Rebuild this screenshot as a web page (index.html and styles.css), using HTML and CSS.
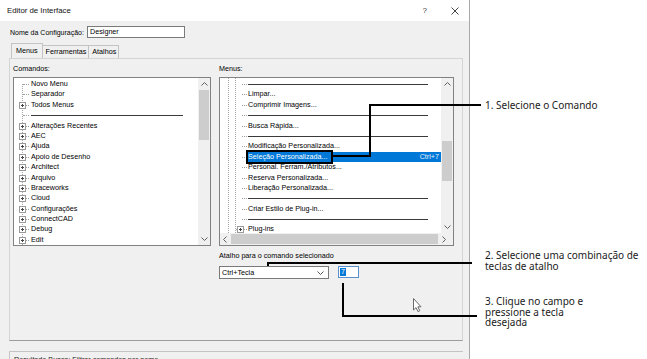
FILE: index.html
```html
<!DOCTYPE html>
<html lang="pt">
<head>
<meta charset="utf-8">
<title>Editor de Interface</title>
<link rel="stylesheet" href="styles.css">
</head>
<body>
<div class="screen">
  <div class="dialog">
    <div class="titlebar">
      <span class="title">Editor de Interface</span>
      <span class="tb-help">?</span>
      <svg class="tb-close" width="8" height="8" viewBox="0 0 8 8"><path d="M0.5 0.5L7.5 7.5M7.5 0.5L0.5 7.5" stroke="#444" stroke-width="1" fill="none"/></svg>
    </div>
    <div class="body">
      <div class="config-row">
        <span class="config-label">Nome da Configuração:</span>
        <div class="input">Designer</div>
      </div>
      <div class="tabs">
        <div class="tab active">Menus</div>
        <div class="tab">Ferramentas</div>
        <div class="tab">Atalhos</div>
      </div>
      <div class="panel">
        <div class="col col-left">
          <div class="label">Comandos:</div>
          <div class="listbox lb-left">
            <div class="tree tree-left">
              <div class="row">Novo Menu</div>
              <div class="row">Separador</div>
              <div class="row"><i class="exp"></i>Todos Menus</div>
              <div class="row sep"></div>
              <div class="row"><i class="exp"></i>Alterações Recentes</div>
              <div class="row"><i class="exp"></i>AEC</div>
              <div class="row"><i class="exp"></i>Ajuda</div>
              <div class="row"><i class="exp"></i>Apoio de Desenho</div>
              <div class="row"><i class="exp"></i>Architect</div>
              <div class="row"><i class="exp"></i>Arquivo</div>
              <div class="row"><i class="exp"></i>Braceworks</div>
              <div class="row"><i class="exp"></i>Cloud</div>
              <div class="row"><i class="exp"></i>Configurações</div>
              <div class="row"><i class="exp"></i>ConnectCAD</div>
              <div class="row"><i class="exp"></i>Debug</div>
              <div class="row"><i class="exp"></i>Edit</div>
            </div>
            <div class="vscroll vs-left">
              <svg class="arrow" width="7" height="4" viewBox="0 0 7 4"><polyline points="0.5,3.5 3.5,0.5 6.5,3.5" fill="none" stroke="#606060"/></svg>
              <div class="thumb"></div>
              <svg class="arrow arrow-down" width="7" height="4" viewBox="0 0 7 4"><polyline points="0.5,0.5 3.5,3.5 6.5,0.5" fill="none" stroke="#606060"/></svg>
            </div>
          </div>
        </div>
        <div class="col col-right">
          <div class="label">Menus:</div>
          <div class="listbox lb-right">
            <div class="tree tree-right">
              <div class="row sep"></div>
              <div class="row">Limpar...</div>
              <div class="row">Comprimir Imagens...</div>
              <div class="row sep"></div>
              <div class="row">Busca Rápida...</div>
              <div class="row sep"></div>
              <div class="row">Modificação Personalizada...</div>
              <div class="row selected"><span>Seleção Personalizada...</span><span class="accel">Ctrl+7</span></div>
              <div class="row">Personal. Ferram./Atributos...</div>
              <div class="row">Reserva Personalizada...</div>
              <div class="row">Liberação Personalizada...</div>
              <div class="row sep"></div>
              <div class="row">Criar Estilo de Plug-in...</div>
              <div class="row sep"></div>
              <div class="row parent"><i class="exp"></i>Plug-ins</div>
            </div>
            <div class="vscroll vs-right">
              <svg class="arrow" width="7" height="4" viewBox="0 0 7 4"><polyline points="0.5,3.5 3.5,0.5 6.5,3.5" fill="none" stroke="#606060"/></svg>
              <div class="thumb"></div>
              <svg class="arrow arrow-down" width="7" height="4" viewBox="0 0 7 4"><polyline points="0.5,0.5 3.5,3.5 6.5,0.5" fill="none" stroke="#606060"/></svg>
            </div>
            <div class="hscroll">
              <svg class="harrow" width="4" height="7" viewBox="0 0 4 7"><polyline points="3.5,0.5 0.5,3.5 3.5,6.5" fill="none" stroke="#606060"/></svg>
              <div class="hthumb"></div>
              <svg class="harrow harrow-right" width="4" height="7" viewBox="0 0 4 7"><polyline points="0.5,0.5 3.5,3.5 0.5,6.5" fill="none" stroke="#606060"/></svg>
            </div>
          </div>
          <div class="label shortcut-label">Atalho para o comando selecionado</div>
          <div class="shortcut-row">
            <div class="combo"><span>Ctrl+Tecla</span>
              <svg width="7" height="4" viewBox="0 0 7 4"><polyline points="0.5,0.5 3.5,3.5 6.5,0.5" fill="none" stroke="#555"/></svg>
            </div>
            <div class="keybox"><span class="keysel">7</span></div>
          </div>
        </div>
      </div>
      <div class="status">Resultado Busca: Filtrar comandos por nome</div>
    </div>
  </div>
  <div class="notes">
    <div class="note note1">1. Selecione o Comando</div>
    <div class="note note2"><div class="nl">2. Selecione uma combinação de</div><div class="nl">teclas de atalho</div></div>
    <div class="note note3"><div class="nl">3. Clique no campo e</div><div class="nl">pressione a tecla</div><div class="nl">desejada</div></div>
  </div>
  <div class="overlay">
    <svg width="647" height="359" viewBox="0 0 647 359">
      <rect x="247" y="151" width="85" height="12" fill="none" stroke="#000" stroke-width="2"/>
      <path d="M332 156 H370 V105 H481" fill="none" stroke="#000" stroke-width="2"/>
      <path d="M268 266 V263 H472" fill="none" stroke="#000" stroke-width="2"/>
      <path d="M343 283 V316 H477" fill="none" stroke="#000" stroke-width="2"/>
      <path d="M413.5 298.5 V310 L416 307.6 L418 311.6 L419.8 310.7 L417.8 306.8 L421 306.8 Z" fill="#fff" stroke="#6a6a6a" stroke-width="1" stroke-linejoin="round"/>
    </svg>
  </div>
</div>
</body>
</html>
```

FILE: styles.css
```css
* { box-sizing: border-box; }
html, body { margin: 0; padding: 0; }
body {
  width: 647px;
  height: 359px;
  overflow: hidden;
  background: #fff;
  font-family: "Liberation Sans", Arial, sans-serif;
  font-size: 7.2px;
  color: #000;
}
.screen {
  position: relative;
  display: flex;
  width: 647px;
  height: 359px;
}
.dialog {
  flex: none;
  width: 470px;
  height: 359px;
  background: #f0f0f0;
  border-right: 1px solid #a8a8a8;
  display: flex;
  flex-direction: column;
}
.titlebar {
  flex: none;
  height: 21px;
  background: #fff;
  display: flex;
  align-items: center;
  padding-left: 7px;
}
.title { font-size: 7.8px; color: #111; }
.tb-help { margin-left: auto; font-size: 8px; color: #333; }
.tb-close { margin-left: 24px; margin-right: 10px; }

.body {
  flex: 1;
  display: flex;
  flex-direction: column;
  padding: 0 6px 0 9px;
}
.config-row {
  margin-top: 5px;
  height: 12px;
  display: flex;
  align-items: center;
}
.config-label {
  flex: none;
  width: 78px;
  padding-left: 1px;
  white-space: nowrap;
  font-size: 7px;
}
.input {
  width: 98px;
  height: 12px;
  border: 1px solid #7a7a7a;
  background: #fff;
  padding-left: 2px;
  line-height: 10px;
}
.tabs {
  margin-top: 5px;
  height: 15px;
  display: flex;
  align-items: flex-end;
  padding-left: 2px;
}
.tab {
  height: 13px;
  line-height: 12px;
  padding: 0 2px 0 3px;
  border: 1px solid #c4c4c4;
  border-bottom: none;
  margin-left: -1px;
  background: #f0f0f0;
  white-space: nowrap;
}
.tab.active { height: 15px; line-height: 14px; padding: 0 4px; margin-left: 0; }

.panel {
  flex: none;
  height: 283px;
  border: 1px solid #d4d4d4;
  border-bottom-color: #9c9c9c;
  padding: 5px 8px 0 3px;
  display: flex;
  gap: 8px;
}
.col-left { width: 198px; }
.col-right { width: 235px; }
.label { height: 10px; line-height: 10px; white-space: nowrap; }

.listbox {
  margin-top: 3px;
  height: 169px;
  border: 1px solid #828282;
  background: #fff;
  display: grid;
  overflow: hidden;
}
.lb-left { grid-template-columns: 1fr 12px; }
.lb-right { grid-template-columns: 1fr 12px; grid-template-rows: 1fr 12px; }

.tree {
  overflow: hidden;
  padding-top: 1px;
  background-repeat: no-repeat;
}
.tree-left {
  background-image: repeating-linear-gradient(to bottom, #a8a8a8 0 1px, transparent 1px 2px);
  background-size: 1px 100%;
  background-position: 8px 6px;
}
.tree-right {
  background-image:
    repeating-linear-gradient(to bottom, #a8a8a8 0 1px, transparent 1px 2px),
    repeating-linear-gradient(to bottom, #a8a8a8 0 1px, transparent 1px 2px);
  background-size: 1px 100%, 1px 100%;
  background-position: 8px 0, 15px 0;
}
.row {
  position: relative;
  height: 10.4px;
  line-height: 10.4px;
  white-space: nowrap;
}
.row::before {
  content: "";
  position: absolute;
  top: 5px;
  height: 0;
  border-top: 1px dotted #a0a0a0;
}
.tree-left .row { padding-left: 17px; }
.tree-left .row::before { left: 9px; width: 6px; }
.tree-right .row { padding-left: 28px; }
.tree-right .row::before { left: 22px; width: 5px; }
.tree-right .row.parent::before { left: 16px; width: 11px; }

.sep::after {
  content: "";
  position: absolute;
  top: 5px;
  height: 0;
  border-top: 1px solid #3a3a3a;
}
.tree-left .sep::after { left: 17px; width: 152px; }
.tree-right .sep::after { left: 28px; width: 180px; }

.exp {
  position: absolute;
  top: 2px;
  width: 7px;
  height: 7px;
  border: 1px solid #9a9a9a;
  background: #fff;
}
.tree-left .exp { left: 5px; }
.tree-right .exp { left: 17px; }
.exp::before, .exp::after {
  content: "";
  position: absolute;
  background: #444;
}
.exp::before { left: 1px; top: 2px; width: 3px; height: 1px; }
.exp::after { left: 2px; top: 1px; width: 1px; height: 3px; }

.selected {
  display: flex;
  justify-content: space-between;
  padding-right: 2px;
  color: #fff;
  background: linear-gradient(#0078d7, #0078d7) no-repeat 27px 0 / calc(100% - 27px) 100%;
}
.tree-right .selected { padding-left: 28px; }
.accel { color: #e8f0fa; }

.vscroll {
  background: #f0f0f0;
  display: flex;
  flex-direction: column;
  align-items: center;
}
.arrow { flex: none; }
.vs-left .arrow { margin-top: 4px; }
.vs-left .thumb { margin-top: 4px; width: 10px; height: 50px; background: #cdcdcd; }
.vs-left .arrow-down { margin-top: auto; margin-bottom: 4px; }
.vs-right .arrow { margin-top: 4px; }
.vs-right .thumb { margin-top: 55px; width: 10px; height: 40px; background: #cdcdcd; }
.vs-right .arrow-down { margin-top: auto; margin-bottom: 4px; }

.hscroll {
  grid-column: 1 / -1;
  background: #f0f0f0;
  display: flex;
  align-items: center;
}
.harrow { flex: none; margin-left: 3px; }
.hthumb { margin-left: 4px; width: 207px; height: 10px; background: #cdcdcd; }
.harrow-right { margin-left: auto; margin-right: 7px; }

.shortcut-label { margin-top: 5px; }
.shortcut-row {
  margin-top: 5px;
  display: flex;
  align-items: flex-start;
}
.combo {
  width: 110px;
  height: 13px;
  border: 1px solid #7a7a7a;
  background: #fff;
  display: flex;
  align-items: center;
  justify-content: space-between;
  padding: 0 4px 0 2px;
}
.keybox {
  margin-left: 9px;
  width: 21px;
  height: 12px;
  border: 1px solid #5b8fcf;
  background: #fff;
  padding: 1px 0 0 1px;
}
.keysel {
  display: block;
  width: 6px;
  height: 8px;
  line-height: 8px;
  background: #0078d7;
  color: #fff;
  text-align: center;
}

.status {
  margin-top: 10px;
  width: 454px;
  height: 20px;
  border-top: 1px solid #c4c4c4;
  border-left: 1px solid #c4c4c4;
  padding: 3px 0 0 4px;
  color: #222;
  white-space: nowrap;
}

.notes {
  flex: none;
  padding-left: 15px;
  font-family: "Noto Sans", "Open Sans", sans-serif;
  font-size: 10px;
  color: #1a1a1a;
  white-space: nowrap;
}
.note1 { margin-top: 99px; height: 12px; line-height: 12px; }
.note2 { margin-top: 139px; }
.note2 .nl { height: 11px; line-height: 11px; }
.note3 { margin-top: 24px; }
.note3 .nl { height: 10.5px; line-height: 10.5px; }

.overlay {
  position: absolute;
  left: 0;
  top: 0;
  width: 647px;
  height: 359px;
  z-index: 10;
  pointer-events: none;
}
.overlay svg { display: block; }
```
